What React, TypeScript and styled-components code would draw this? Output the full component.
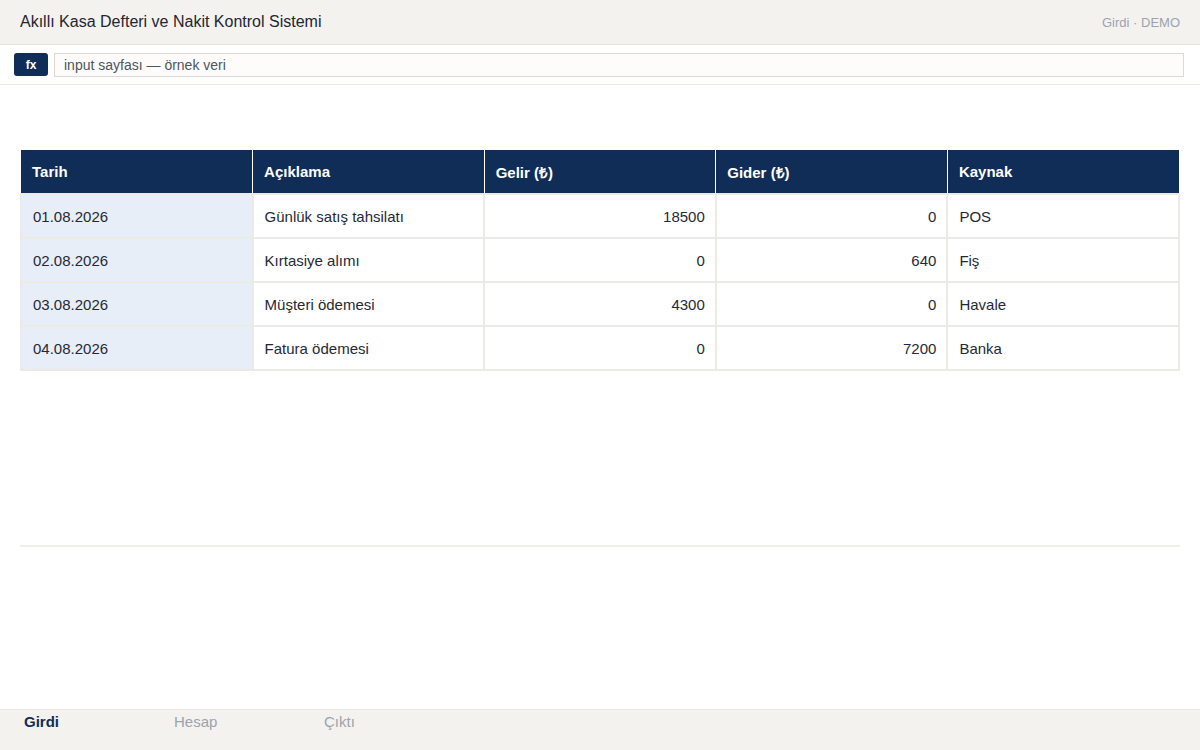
import React from "react";
import styled, { createGlobalStyle } from "styled-components";

const GlobalStyle = createGlobalStyle`
  html, body { margin: 0; padding: 0; background: #ffffff; }
  body { font-family: "Liberation Sans", Arial, Helvetica, sans-serif; color: #1f2937; }
  * { box-sizing: border-box; }
`;

const Page = styled.div`
  width: 1200px;
  height: 750px;
  display: flex;
  flex-direction: column;
  overflow: hidden;
`;

const TopBar = styled.header`
  height: 45px;
  flex: 0 0 45px;
  background: #f3f2ee;
  border-bottom: 1px solid #e6e3dd;
  display: flex;
  align-items: center;
  justify-content: space-between;
  padding: 0 20px;
`;

const Title = styled.h1`
  margin: 0;
  font-size: 16px;
  font-weight: 400;
  color: #1e2633;
`;

const Meta = styled.span`
  font-size: 13px;
  color: #9ca3af;
`;

const FormulaBar = styled.div`
  height: 40px;
  flex: 0 0 40px;
  display: flex;
  align-items: center;
  gap: 6px;
  padding: 0 16px 0 14px;
  border-bottom: 1px solid #e9e7e2;
  background: #ffffff;
`;

const FxButton = styled.span`
  width: 34px;
  height: 23px;
  border-radius: 3px;
  background: #0f2d57;
  color: #ffffff;
  font-size: 12px;
  font-weight: 700;
  display: flex;
  align-items: center;
  justify-content: center;
`;

const FormulaInput = styled.div`
  flex: 1;
  height: 24px;
  border: 1px solid #dedad3;
  background: #fdfcfa;
  font-size: 14px;
  color: #4b5563;
  display: flex;
  align-items: center;
  padding-left: 9px;
`;

const Main = styled.main`
  flex: 1;
  padding: 65px 20px 0;
  display: flex;
  flex-direction: column;
`;

const Table = styled.table`
  width: 1160px;
  border-collapse: collapse;
  table-layout: fixed;
`;

const Th = styled.th`
  background: #0f2d57;
  color: #ffffff;
  font-size: 15px;
  font-weight: 700;
  text-align: left;
  height: 44px;
  padding: 0 11px;
  border-left: 1px solid #ffffff;
  border-right: 1px solid #ffffff;
  &:first-child { border-left: none; }
  &:last-child { border-right: none; }
`;

const Td = styled.td<{ $num?: boolean; $date?: boolean }>`
  height: 44px;
  padding: 0 ${(p) => (p.$num ? "10px" : "11px")};
  font-size: 15px;
  color: #1f2937;
  text-align: ${(p) => (p.$num ? "right" : "left")};
  background: ${(p) => (p.$date ? "#e8eef8" : "#ffffff")};
  border: 2px solid #eceae5;
`;

const Divider = styled.hr`
  margin: 174px 0 0;
  width: 1160px;
  border: none;
  height: 2px;
  background: #efeeea;
`;

const TabBar = styled.nav`
  height: 41px;
  flex: 0 0 41px;
  background: #f3f2ee;
  border-top: 1px solid #e8e5df;
  display: flex;
  align-items: flex-start;
  padding-top: 3px;
`;

const Tab = styled.span<{ $active?: boolean }>`
  width: 150px;
  padding-left: 24px;
  font-size: 15px;
  font-weight: ${(p) => (p.$active ? 700 : 400)};
  color: ${(p) => (p.$active ? "#0f2d57" : "#9ca3af")};
`;

const rows = [
  { date: "01.08.2026", desc: "Günlük satış tahsilatı", in: 18500, out: 0, src: "POS" },
  { date: "02.08.2026", desc: "Kırtasiye alımı", in: 0, out: 640, src: "Fiş" },
  { date: "03.08.2026", desc: "Müşteri ödemesi", in: 4300, out: 0, src: "Havale" },
  { date: "04.08.2026", desc: "Fatura ödemesi", in: 0, out: 7200, src: "Banka" },
];

export default function App() {
  return (
    <Page>
      <GlobalStyle />
      <TopBar>
        <Title>Akıllı Kasa Defteri ve Nakit Kontrol Sistemi</Title>
        <Meta>Girdi · DEMO</Meta>
      </TopBar>
      <FormulaBar>
        <FxButton>fx</FxButton>
        <FormulaInput>input sayfası — örnek veri</FormulaInput>
      </FormulaBar>
      <Main>
        <Table>
          <thead>
            <tr>
              <Th>Tarih</Th>
              <Th>Açıklama</Th>
              <Th>Gelir (₺)</Th>
              <Th>Gider (₺)</Th>
              <Th>Kaynak</Th>
            </tr>
          </thead>
          <tbody>
            {rows.map((r) => (
              <tr key={r.date}>
                <Td $date>{r.date}</Td>
                <Td>{r.desc}</Td>
                <Td $num>{r.in}</Td>
                <Td $num>{r.out}</Td>
                <Td>{r.src}</Td>
              </tr>
            ))}
          </tbody>
        </Table>
        <Divider />
      </Main>
      <TabBar>
        <Tab $active>Girdi</Tab>
        <Tab>Hesap</Tab>
        <Tab>Çıktı</Tab>
      </TabBar>
    </Page>
  );
}
